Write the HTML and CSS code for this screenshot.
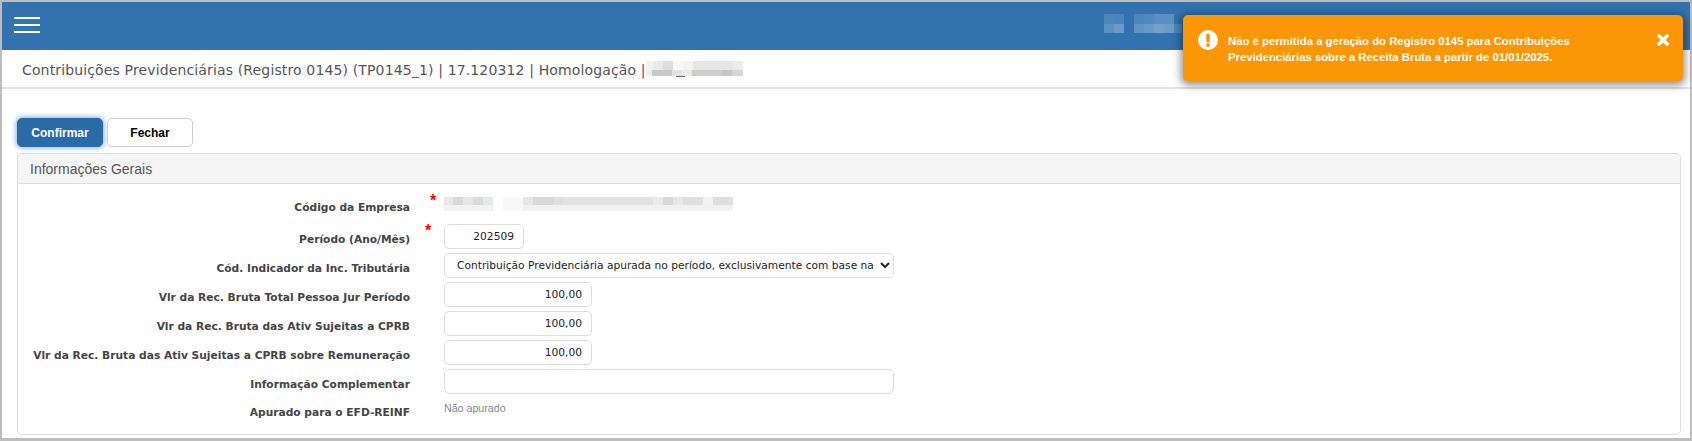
FILE: index.html
```html
<!DOCTYPE html>
<html lang="pt-BR">
<head>
<meta charset="utf-8">
<title>Contribuições Previdenciárias</title>
<link rel="stylesheet" href="styles.css">
</head>
<body>
<div class="frame">
  <header class="topbar">
    <button class="menu" aria-label="Menu"><span></span><span></span><span></span></button>
    <svg class="blur-user" width="80" height="19" viewBox="0 0 80 19" shape-rendering="crispEdges">
      <rect x="0" y="0" width="10" height="10" fill="#4d86ba"/><rect x="10" y="0" width="10" height="10" fill="#4a84b9"/>
      <rect x="0" y="10" width="10" height="9" fill="#5b90c1"/><rect x="10" y="10" width="10" height="9" fill="#6c9bc6"/>
      <rect x="30" y="0" width="10" height="10" fill="#4d86ba"/><rect x="40" y="0" width="10" height="10" fill="#5089bc"/><rect x="50" y="0" width="20" height="10" fill="#5a8fc1"/>
      <rect x="30" y="10" width="10" height="9" fill="#5f93c3"/><rect x="40" y="10" width="10" height="9" fill="#6a9ac6"/><rect x="50" y="10" width="10" height="9" fill="#74a2cb"/><rect x="60" y="10" width="10" height="9" fill="#6c9cc8"/>
      <rect x="70" y="10" width="8" height="9" fill="#4f88bb"/>
    </svg>
  </header>
  <div class="titlebar">
    <h1 class="title">Contribuições Previdenciárias (Registro 0145) (TP0145_1) | 17.120312 | Homologação |</h1>
    <svg class="blur-title" width="97" height="18" viewBox="3 0 97 18" shape-rendering="crispEdges">
      <rect x="0" y="0" width="10" height="9" fill="#f2f2f2"/><rect x="10" y="0" width="10" height="9" fill="#e9e9e9"/><rect x="20" y="0" width="10" height="9" fill="#dddddd"/><rect x="30" y="0" width="10" height="9" fill="#f8f8f8"/><rect x="40" y="0" width="10" height="9" fill="#f3f3f3"/><rect x="50" y="0" width="10" height="9" fill="#e8e6e3"/><rect x="60" y="0" width="30" height="9" fill="#e6e6e6"/><rect x="90" y="0" width="10" height="9" fill="#ececec"/>
      <rect x="0" y="9" width="9" height="6" fill="#eeeeee"/><rect x="9" y="9" width="20" height="6" fill="#c8c8c8"/><rect x="29" y="9" width="10" height="6" fill="#e2e2e2"/>
      <rect x="39" y="9" width="10" height="6" fill="#ececec"/><rect x="49" y="9" width="30" height="6" fill="#cdcdcd"/><rect x="79" y="9" width="10" height="6" fill="#c6c6c6"/><rect x="89" y="9" width="11" height="6" fill="#d6d6d6"/>
      <rect x="33" y="15" width="9" height="1" fill="#666"/>
    </svg>
  </div>
  <main class="content">
    <div class="actions">
      <button class="btn btn-primary">Confirmar</button>
      <button class="btn">Fechar</button>
    </div>
    <section class="panel">
      <div class="panel-heading">Informações Gerais</div>
      <div class="panel-body">
        <div class="row row-static">
          <label class="label">Código da Empresa</label>
          <span class="req req-a">*</span>
          <svg class="blur-field" width="289" height="14" viewBox="0 0 289 14" shape-rendering="crispEdges">
            <rect x="0" y="0" width="9" height="8" fill="#e8e8e8"/><rect x="9" y="0" width="10" height="8" fill="#d8d8d8"/><rect x="19" y="0" width="10" height="8" fill="#e6e6e6"/><rect x="29" y="0" width="10" height="8" fill="#dadada"/><rect x="39" y="0" width="10" height="8" fill="#e4e8e8"/>
            <rect x="0" y="8" width="49" height="6" fill="#f2f2f2"/>
            <rect x="59" y="0" width="20" height="14" fill="#f8f8f8"/>
            <rect x="79" y="0" width="10" height="8" fill="#e6e6e6"/><rect x="89" y="0" width="20" height="8" fill="#d8d8d8"/><rect x="109" y="0" width="10" height="8" fill="#dedede"/><rect x="119" y="0" width="90" height="8" fill="#e2e2e2"/><rect x="209" y="0" width="10" height="8" fill="#ebebeb"/><rect x="219" y="0" width="10" height="8" fill="#d8d8d8"/><rect x="229" y="0" width="10" height="8" fill="#e8e8e8"/><rect x="239" y="0" width="20" height="8" fill="#dfdfdf"/><rect x="259" y="0" width="10" height="8" fill="#f2f2f2"/><rect x="269" y="0" width="20" height="8" fill="#dedede"/>
            <rect x="79" y="8" width="210" height="6" fill="#f1f1f1"/>
          </svg>
        </div>
        <div class="row row-periodo">
          <label class="label">Período (Ano/Mês)</label>
          <span class="req req-b">*</span>
          <input class="field field-xs" value="202509">
        </div>
        <div class="row">
          <label class="label">Cód. Indicador da Inc. Tributária</label>
          <select class="field field-lg"><option>Contribuição Previdenciária apurada no período, exclusivamente com base na Receita Bruta</option></select>
        </div>
        <div class="row">
          <label class="label">Vlr da Rec. Bruta Total Pessoa Jur Período</label>
          <input class="field field-sm" value="100,00">
        </div>
        <div class="row">
          <label class="label">Vlr da Rec. Bruta das Ativ Sujeitas a CPRB</label>
          <input class="field field-sm" value="100,00">
        </div>
        <div class="row">
          <label class="label">Vlr da Rec. Bruta das Ativ Sujeitas a CPRB sobre Remuneração</label>
          <input class="field field-sm" value="100,00">
        </div>
        <div class="row">
          <label class="label">Informação Complementar</label>
          <input class="field field-lg field-text">
        </div>
        <div class="row row-last">
          <label class="label">Apurado para o EFD-REINF</label>
          <span class="static">Não apurado</span>
        </div>
      </div>
    </section>
  </main>
  <aside class="toast">
    <svg class="toast-icon" width="20" height="20" viewBox="0 0 20 20"><circle cx="10" cy="10" r="10" fill="#fff"/><rect x="8.2" y="3.6" width="3.6" height="8.6" rx="1.2" fill="#fb9607"/><circle cx="10" cy="15" r="1.9" fill="#fb9607"/></svg>
    <p class="toast-text">Não é permitida a geração do Registro 0145 para Contribuições Previdenciárias sobre a Receita Bruta a partir de 01/01/2025.</p>
    <svg class="toast-close" width="12" height="12" viewBox="0 0 12 12"><path d="M2 2 L10 10 M10 2 L2 10" stroke="#fff" stroke-width="3.6" stroke-linecap="round"/></svg>
  </aside>
</div>
</body>
</html>
```
FILE: styles.css
```css
* { box-sizing: border-box; }
html, body { margin: 0; height: 100%; }
body { background: #bdbdbd; padding: 2px; overflow: hidden; }
.frame { position: relative; background: #fff; height: 436px; display: flex; flex-direction: column; font-family: "DejaVu Sans", sans-serif; color: #333; }
.topbar { height: 48px; background: #3272ae; flex: none; display: flex; align-items: center; justify-content: space-between; padding-left: 12px; }
.menu { background: none; border: 0; padding: 0; width: 26px; height: 16px; margin-bottom: 2px; display: flex; flex-direction: column; justify-content: space-between; }
.menu span { display: block; height: 2px; background: #fff; }
.blur-user { margin-right: 506px; margin-bottom: 5px; }
.titlebar { height: 39px; flex: none; border-bottom: 2px solid #e2e2e2; display: flex; align-items: center; padding: 2px 0 0 20px; }
.title { margin: 0; font-size: 14px; letter-spacing: .14px; font-weight: 400; color: #555; white-space: nowrap; }
.blur-title { margin: 1px 0 0 0; }
.content { padding: 29px 9px 0 15px; flex: 1; display: flex; flex-direction: column; }
.actions { display: flex; gap: 4px; height: 29px; margin-bottom: 6px; }
.btn { width: 86px; height: 29px; border: 1px solid #ccc; border-radius: 5px; background: #fff; color: #000; font: 700 12px "Liberation Sans", sans-serif; }
.btn-primary { background: #2a6aa6; border-color: #2a6aa6; color: #fff; box-shadow: 0 0 5px 1px rgba(60,130,200,.65); }
.panel { border: 1px solid #ddd; border-radius: 5px; height: 282px; }
.panel-heading { height: 30px; background: #f5f5f5; border-bottom: 1px solid #ddd; border-radius: 4px 4px 0 0; padding-left: 12px; display: flex; align-items: center; font: 14px "Liberation Sans", sans-serif; color: #555; }
.panel-body { padding-top: 11px; }
.row { display: flex; align-items: center; height: 25px; margin-bottom: 4px; position: relative; }
.row-static { height: 28px; margin-bottom: 1px; align-items: flex-start; }
.label { width: 392px; flex: none; text-align: right; font-size: 10.67px; font-weight: 700; color: #444; margin-right: 34px; padding-top: 5px; white-space: nowrap; }
.row-static .label { padding-top: 6px; }
.row-last { align-items: flex-start; }
.row-last .label { padding-top: 8px; }
.req { position: absolute; color: #f00; font: 700 16px/16px "Liberation Sans", sans-serif; }
.req-a { left: 412px; top: -2px; }
.req-b { left: 407px; top: -1px; }
.blur-field { margin-top: 2px; }
.field { height: 25px; border: 1px solid #ddd; border-radius: 5px; background: #fff; color: #222; font: 10.67px "DejaVu Sans", sans-serif; padding: 0 9px; text-align: right; outline: 0; }
.field-xs { width: 80px; }
.field-sm { width: 148px; }
.field-lg { width: 450px; }
select.field { text-align: left; padding: 0 4px 0 8px; }
.field-text { text-align: left; }
.static { font: 10.67px "Liberation Sans", sans-serif; color: #888; margin-top: 4px; }
.toast { position: absolute; left: 1181px; top: 13px; width: 500px; height: 66px; background: #fb9607; border-radius: 5px; box-shadow: 0 2px 9px 2px rgba(0,0,0,.45); display: flex; align-items: flex-start; padding: 15px 14px 0 15px; }
.toast-icon { flex: none; margin-right: 10px; }
.toast-text { margin: 3px 0 0; width: 375px; flex: none; font: 700 11.33px/16px "Liberation Sans", sans-serif; color: #fff; }
.toast-close { flex: none; margin-left: auto; margin-top: 4px; }
```
